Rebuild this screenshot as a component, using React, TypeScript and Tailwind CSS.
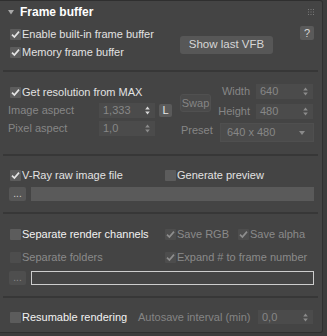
const font = { fontFamily: '"Liberation Sans", Arial, sans-serif' };

function Tick({ dim }: { dim?: boolean }) {
  return (
    <svg width="11" height="11" viewBox="0 0 11 11" fill="none">
      <path d="M2 5.6 L4.4 8 L9 2.6" stroke={dim ? "#8e8e8e" : "#e4e4e4"} strokeWidth="1.7" />
    </svg>
  );
}

function Check({ checked, disabled, label, bright }: { checked?: boolean; disabled?: boolean; label: string; bright?: boolean }) {
  return (
    <div className="flex items-center gap-[1px]">
      <div className={`w-[11px] h-[11px] rounded-[1px] ${disabled ? "bg-[#4d4d4d]" : "bg-[#5c5c5c]"}`}>
        {checked && <Tick dim={disabled} />}
      </div>
      <span className={`text-[11px] leading-none ${disabled ? "text-[#8a8a8a]" : bright ? "text-[#f2f2f2]" : "text-[#e2e2e2]"}`}>{label}</span>
    </div>
  );
}

function Spin({ light }: { light?: boolean }) {
  return (
    <svg width="5" height="9" viewBox="0 0 5 9">
      <path d="M2.5 0.5 L4.8 3.5 L0.2 3.5 Z M2.5 8.5 L4.8 5.5 L0.2 5.5 Z" fill={light ? "#d8d8d8" : "#8c8c8c"} />
    </svg>
  );
}

function Field({ value, w, h = "h-[15px]", light }: { value: string; w: string; h?: string; light?: boolean }) {
  return (
    <div className={`${w} ${h} bg-[#4b4b4b] flex items-center justify-between pl-[4px] pr-[5px]`}>
      <span className="text-[11px] leading-none text-[#878787]">{value}</span>
      <Spin light={light} />
    </div>
  );
}

function Sep({ mt }: { mt: string }) {
  return <div className={`${mt} ml-[3px] w-[315px] h-[2px] bg-[#373737]`} />;
}

export default function App() {
  return (
    <div className="w-[327px] h-[336px] bg-[#3c3c3c] overflow-hidden" style={font}>
      <div className="w-[323px] h-[333px] bg-[#444444] border-t border-r border-b border-[#2f2f2f] rounded-br-[3px] rounded-tr-[3px]">
        {/* title */}
        <div className="flex items-center h-[21px] pl-[8px] pt-[1px]">
          <svg width="6" height="5" viewBox="0 0 6 5">
            <path d="M0 0 L6 0 L3 4.5 Z" fill="#a8a8a8" />
          </svg>
          <span className="ml-[6px] text-[12px] font-bold text-white leading-none">Frame buffer</span>
          <svg className="ml-auto mr-[8px]" width="6" height="6" viewBox="0 0 6 6" fill="#7a7a7a">
            <rect x="0" y="0" width="1" height="1" /><rect x="2.5" y="0" width="1" height="1" /><rect x="5" y="0" width="1" height="1" />
            <rect x="0" y="2.5" width="1" height="1" /><rect x="2.5" y="2.5" width="1" height="1" /><rect x="5" y="2.5" width="1" height="1" />
            <rect x="0" y="5" width="1" height="1" /><rect x="2.5" y="5" width="1" height="1" /><rect x="5" y="5" width="1" height="1" />
          </svg>
        </div>

        {/* section 1 */}
        <div className="flex pl-[10px] pt-[3px]">
          <div className="w-[170px]">
            <div className="h-[18px] flex items-center"><Check checked label="Enable built-in frame buffer" /></div>
            <div className="h-[18px] flex items-center"><Check checked label="Memory frame buffer" /></div>
          </div>
          <div className="mt-[11px] w-[93px] h-[18px] rounded-[3px] bg-[#575757] flex items-center justify-center text-[11.5px] text-[#d6d6d6]">
            Show last VFB
          </div>
          <div className="ml-[27px] mt-[1px] w-[14px] h-[14px] rounded-[2px] bg-[#5a5a5a] flex items-center justify-center text-[11px] text-[#d6d6d6]">
            ?
          </div>
        </div>
        <Sep mt="mt-[9px]" />

        {/* section 2 */}
        <div className="flex pt-[11px]">
          <div className="w-[176px] pl-[8px]">
            <div className="h-[18px] flex items-center pl-[2px]"><Check checked label="Get resolution from MAX" /></div>
            <div className="h-[18px] flex items-center">
              <span className="w-[91px] text-[11px] text-[#868686] leading-none">Image aspect</span>
              <Field value="1,333" w="w-[56px]" light />
              <div className="ml-[4px] w-[13px] h-[13px] rounded-[2px] bg-[#5a5a5a] flex items-center justify-center text-[11px] text-[#e8e8e8]">L</div>
            </div>
            <div className="h-[19px] flex items-center">
              <span className="w-[91px] text-[11px] text-[#868686] leading-none">Pixel aspect</span>
              <Field value="1,0" w="w-[56px]" />
            </div>
          </div>
          <div className="ml-[4px]">
            <div className="flex">
              <div className="mt-[11px] w-[31px] h-[18px] rounded-[3px] bg-[#4a4a4a] border border-[#505050] flex items-center justify-center text-[11px] text-[#858585]">
                Swap
              </div>
              <div>
                <div className="h-[16px] flex items-center">
                  <span className="w-[39px] text-right text-[11px] text-[#868686] leading-none">Width</span>
                  <div className="ml-[6px]"><Field value="640" w="w-[57px]" /></div>
                </div>
                <div className="mt-[4px] h-[16px] flex items-center">
                  <span className="w-[39px] text-right text-[11px] text-[#868686] leading-none">Height</span>
                  <div className="ml-[6px]"><Field value="480" w="w-[57px]" /></div>
                </div>
              </div>
            </div>
            <div className="mt-[4px] flex items-start">
              <span className="w-[40px] pl-[1px] pt-[2px] text-[11px] text-[#868686] leading-none">Preset</span>
              <div className="w-[94px] h-[19px] bg-[#4b4b4b] border border-[#4f4f4f] flex items-center justify-between pl-[6px] pr-[8px]">
                <span className="text-[11px] leading-none text-[#878787]">640 x 480</span>
                <svg width="6" height="4" viewBox="0 0 6 4"><path d="M0 0 L6 0 L3 4 Z" fill="#8a8a8a" /></svg>
              </div>
            </div>
          </div>
        </div>
        <Sep mt="mt-[12px]" />

        {/* section 3 */}
        <div className="pt-[10px] pl-[9px]">
          <div className="h-[18px] flex items-center">
            <div className="w-[156px] pl-[1px]"><Check checked label="V-Ray raw image file" /></div>
            <Check label="Generate preview" />
          </div>
          <div className="mt-[3px] flex gap-[5px]">
            <div className="w-[17px] h-[14px] rounded-[2px] bg-[#565656] flex items-end justify-center pb-[2px] text-[10px] leading-none text-[#cfcfcf]">...</div>
            <div className="w-[283px] h-[14px] bg-[#5a5a5a]" />
          </div>
        </div>
        <Sep mt="mt-[11px]" />

        {/* section 4 */}
        <div className="pt-[11px] pl-[9px]">
          <div className="h-[18px] flex items-center">
            <div className="w-[156px] pl-[1px]"><Check label="Separate render channels" bright /></div>
            <div className="w-[73px]"><Check checked disabled label="Save RGB" /></div>
            <Check checked disabled label="Save alpha" />
          </div>
          <div className="mt-[5px] h-[18px] flex items-center">
            <div className="w-[156px] pl-[1px]"><Check disabled label="Separate folders" /></div>
            <Check checked disabled label="Expand # to frame number" />
          </div>
          <div className="mt-[5px] flex gap-[5px]">
            <div className="w-[17px] h-[14px] rounded-[2px] bg-[#4e4e4e] flex items-end justify-center pb-[2px] text-[10px] leading-none text-[#8a8a8a]">...</div>
            <div className="w-[283px] h-[14px] border border-[#cdcdcd] bg-[#444444]" />
          </div>
        </div>
        <Sep mt="mt-[11px]" />

        {/* section 5 */}
        <div className="pt-[10px] pl-[10px] h-[18px] flex items-center box-content">
          <div className="w-[128px]"><Check label="Resumable rendering" bright /></div>
          <span className="w-[120px] text-[11px] text-[#858585] leading-none">Autosave interval (min)</span>
          <Field value="0,0" w="w-[55px]" h="h-[14px]" />
        </div>
      </div>
    </div>
  );
}
